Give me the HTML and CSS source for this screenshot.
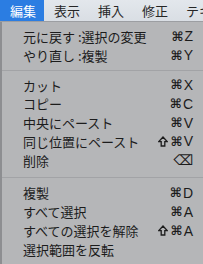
FILE: index.html
```html
<!DOCTYPE html>
<html lang="ja">
<head>
    <meta charset="UTF-8">
    <title>編集メニュー</title>
    <link rel="stylesheet" href="styles.css">
</head>
<body>
    <div class="menubar">
        <span class="bar-item active">編集</span>
        <span class="bar-item">表示</span>
        <span class="bar-item">挿入</span>
        <span class="bar-item">修正</span>
        <span class="bar-item">テキスト</span>
    </div>

    <div class="menu">
        <div class="item"><span>元に戻す :選択の変更</span><span class="key"><i class="sym">⌘</i>Z</span></div>
        <div class="item"><span>やり直し :複製</span><span class="key"><i class="sym">⌘</i>Y</span></div>
        <div class="sep"></div>
        <div class="item"><span>カット</span><span class="key"><i class="sym">⌘</i>X</span></div>
        <div class="item"><span>コピー</span><span class="key"><i class="sym">⌘</i>C</span></div>
        <div class="item"><span>中央にペースト</span><span class="key"><i class="sym">⌘</i>V</span></div>
        <div class="item"><span>同じ位置にペースト</span><span class="key">
            <svg class="shift" width="10" height="11" viewBox="0 0 10 11"><path d="M5 1 L9.2 5.6 H6.8 V10 H3.2 V5.6 H0.8 Z" fill="none" stroke="#1c1c1c" stroke-width="1.3" stroke-linejoin="miter"/></svg><i class="sym">⌘</i>V</span></div>
        <div class="item"><span>削除</span><span class="key"><i class="sym del">⌫</i></span></div>
        <div class="sep sep-wide"></div>
        <div class="item"><span>複製</span><span class="key"><i class="sym">⌘</i>D</span></div>
        <div class="item"><span>すべて選択</span><span class="key"><i class="sym">⌘</i>A</span></div>
        <div class="item"><span>すべての選択を解除</span><span class="key">
            <svg class="shift" width="10" height="11" viewBox="0 0 10 11"><path d="M5 1 L9.2 5.6 H6.8 V10 H3.2 V5.6 H0.8 Z" fill="none" stroke="#1c1c1c" stroke-width="1.3" stroke-linejoin="miter"/></svg><i class="sym">⌘</i>A</span></div>
        <div class="item"><span>選択範囲を反転</span></div>
    </div>
</body>
</html>
```

FILE: styles.css
```css
body {
    margin: 0;
    width: 203px;
    height: 264px;
    overflow: hidden;
    background: #b5b6b8;
    font-family: "Noto Sans CJK JP", "DejaVu Sans", sans-serif;
    font-size: 13px;
    color: #1c1c1c;
}

.menubar {
    display: flex;
    height: 21px;
    background: linear-gradient(#e3e7ec, #d9dee4);
    border-bottom: 1px solid #9c9ea2;
    white-space: nowrap;
    overflow: hidden;
}

.bar-item {
    flex: none;
    padding: 0 8px 0 10px;
    line-height: 21px;
    color: #262626;
}

.bar-item.active {
    background: #2b7de2;
    color: #fff;
}

.menu {
    border-left: 2px solid #8d8e91;
    padding-top: 5px;
    height: 242px;
}

.item {
    display: flex;
    justify-content: space-between;
    align-items: center;
    height: 18.8px;
    padding: 0 10px 0 21px;
    white-space: nowrap;
}

.key {
    display: flex;
    align-items: center;
    font-family: "Liberation Sans", "DejaVu Sans", sans-serif;
    font-size: 14px;
}

.sym {
    font-style: normal;
    font-family: "DejaVu Sans", sans-serif;
    font-size: 13px;
    font-weight: bold;
    margin-right: 1px;
}

.shift {
    margin-right: 3px;
}

.sym.del {
    font-weight: normal;
    font-size: 14px;
    margin-right: 0;
}

.sep {
    height: 1px;
    background: #a2a3a6;
    margin: 5px 0 5px 0;
}

.sep-wide {
    margin: 7px 0 6px 0;
}
```
